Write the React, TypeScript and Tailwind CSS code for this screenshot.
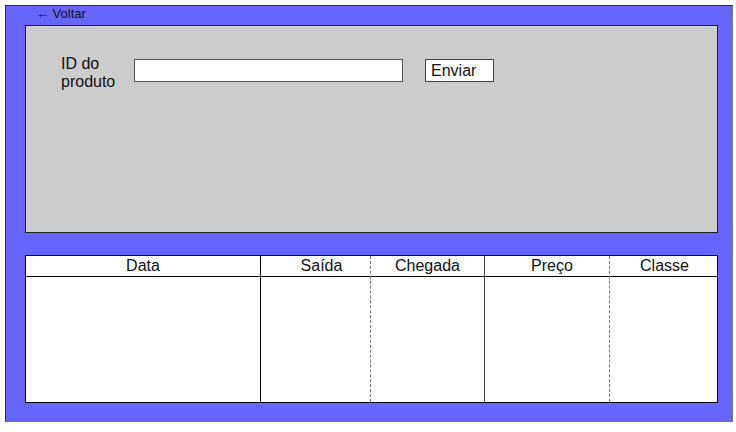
import React from 'react';

const columns = [
  { label: 'Data', width: 'w-[235px]', border: 'border-r border-solid border-black', pad: '' },
  { label: 'Saída', width: 'w-[110px]', border: 'border-r border-dashed border-[#777]', pad: 'pl-[12px]' },
  { label: 'Chegada', width: 'w-[114px]', border: 'border-r border-solid border-[#444]', pad: '' },
  { label: 'Preço', width: 'w-[125px]', border: 'border-r border-dashed border-[#777]', pad: 'pl-[10px]' },
  { label: 'Classe', width: 'flex-1', border: '', pad: 'pl-[2px]' },
];

const App: React.FC = () => {
  return (
    <div className="w-[736px] h-[432px] bg-white pt-[5px] pl-[5px] font-['Liberation_Sans',Arial,sans-serif] text-black">
      <div className="w-[728px] h-[417px] bg-[#6666ff] border border-[#333] border-r-[#777] border-b-[#777] flex flex-col pl-[19px] pr-[14px]">
        {/* Back link */}
        <div className="h-[19px] pl-[11px] text-[13px] leading-[16px] text-[#111]">← Voltar</div>

        {/* Form panel */}
        <div className="h-[208px] bg-[#cccccc] border border-[#222] flex items-start pt-[33px] pl-[35px]">
          <label className="w-[73px] text-[16px] leading-[18px] mt-[-4px] text-[#111]">
            ID do
            <br />
            produto
          </label>
          <input
            type="text"
            className="w-[269px] h-[23px] bg-white border border-[#555] outline-none"
          />
          <button className="ml-[22px] w-[69px] h-[23px] bg-white border border-[#444] text-left pl-[5px] text-[16px] leading-[18px] text-[#111]">
            Enviar
          </button>
        </div>

        {/* Results table */}
        <div className="mt-[22px] h-[148px] w-[693px] bg-white border border-black flex">
          {columns.map((col) => (
            <div key={col.label} className={`${col.width} ${col.border} flex flex-col`}>
              <div className={`h-[21px] border-b border-black text-center text-[16px] leading-[20px] text-[#111] ${col.pad}`}>
                {col.label}
              </div>
              <div className="flex-1" />
            </div>
          ))}
        </div>
      </div>
    </div>
  );
};

export default App;
